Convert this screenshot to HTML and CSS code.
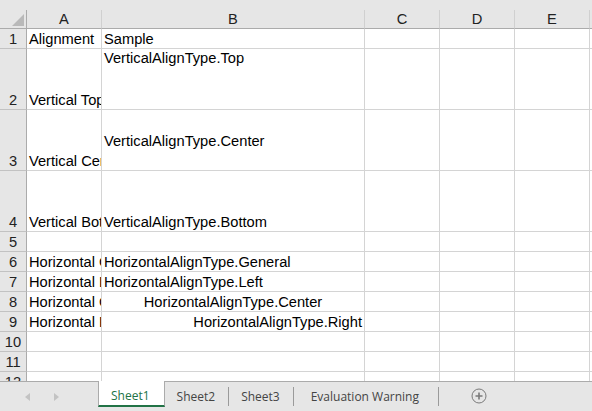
FILE: index.html
```html
<!DOCTYPE html>
<html lang="en">
<head>
    <meta charset="UTF-8">
    <title>Alignment - Sheet1</title>
    <link rel="stylesheet" href="styles.css">
</head>
<body>

<div class="sheet">
    <div class="strip"></div>

    <!-- Column headers -->
    <div class="corner"><span class="tri"></span></div>
    <div class="col-head">A</div>
    <div class="col-head">B</div>
    <div class="col-head">C</div>
    <div class="col-head">D</div>
    <div class="col-head">E</div>
    <div class="col-head"></div>

    <!-- Row 1 -->
    <div class="row-head">1</div>
    <div class="cell">Alignment</div>
    <div class="cell">Sample</div>
    <div class="cell"></div><div class="cell"></div><div class="cell"></div><div class="cell"></div>

    <!-- Row 2 -->
    <div class="row-head">2</div>
    <div class="cell">Vertical Top</div>
    <div class="cell top">VerticalAlignType.Top</div>
    <div class="cell"></div><div class="cell"></div><div class="cell"></div><div class="cell"></div>

    <!-- Row 3 -->
    <div class="row-head">3</div>
    <div class="cell">Vertical Center</div>
    <div class="cell middle">VerticalAlignType.Center</div>
    <div class="cell"></div><div class="cell"></div><div class="cell"></div><div class="cell"></div>

    <!-- Row 4 -->
    <div class="row-head">4</div>
    <div class="cell">Vertical Bottom</div>
    <div class="cell">VerticalAlignType.Bottom</div>
    <div class="cell"></div><div class="cell"></div><div class="cell"></div><div class="cell"></div>

    <!-- Row 5 -->
    <div class="row-head">5</div>
    <div class="cell"></div><div class="cell"></div>
    <div class="cell"></div><div class="cell"></div><div class="cell"></div><div class="cell"></div>

    <!-- Row 6 -->
    <div class="row-head">6</div>
    <div class="cell">Horizontal General</div>
    <div class="cell">HorizontalAlignType.General</div>
    <div class="cell"></div><div class="cell"></div><div class="cell"></div><div class="cell"></div>

    <!-- Row 7 -->
    <div class="row-head">7</div>
    <div class="cell">Horizontal Left</div>
    <div class="cell">HorizontalAlignType.Left</div>
    <div class="cell"></div><div class="cell"></div><div class="cell"></div><div class="cell"></div>

    <!-- Row 8 -->
    <div class="row-head">8</div>
    <div class="cell">Horizontal Center</div>
    <div class="cell center">HorizontalAlignType.Center</div>
    <div class="cell"></div><div class="cell"></div><div class="cell"></div><div class="cell"></div>

    <!-- Row 9 -->
    <div class="row-head">9</div>
    <div class="cell">Horizontal Right</div>
    <div class="cell right">HorizontalAlignType.Right</div>
    <div class="cell"></div><div class="cell"></div><div class="cell"></div><div class="cell"></div>

    <!-- Rows 10 - 12 -->
    <div class="row-head">10</div>
    <div class="cell"></div><div class="cell"></div>
    <div class="cell"></div><div class="cell"></div><div class="cell"></div><div class="cell"></div>

    <div class="row-head">11</div>
    <div class="cell"></div><div class="cell"></div>
    <div class="cell"></div><div class="cell"></div><div class="cell"></div><div class="cell"></div>

    <div class="row-head">12</div>
    <div class="cell"></div><div class="cell"></div>
    <div class="cell"></div><div class="cell"></div><div class="cell"></div><div class="cell"></div>
</div>

<!-- Sheet tabs -->
<div class="tabbar">
    <div class="nav">
        <svg width="5" height="8" viewBox="0 0 5 8"><path d="M5 0 L0 4 L5 8 Z" fill="#c3c3c3"/></svg>
        <svg width="5" height="8" viewBox="0 0 5 8"><path d="M0 0 L5 4 L0 8 Z" fill="#c3c3c3"/></svg>
    </div>
    <div class="tab active">Sheet1</div>
    <div class="tab">Sheet2</div>
    <div class="tab">Sheet3</div>
    <div class="tab">Evaluation Warning</div>
    <div class="add">
        <svg width="16" height="16" viewBox="0 0 16 16">
            <circle cx="8" cy="8" r="7" fill="none" stroke="#7a7a7a" stroke-width="1"/>
            <path d="M4.5 8 H11.5 M8 4.5 V11.5" stroke="#7a7a7a" stroke-width="1.6"/>
        </svg>
    </div>
</div>

</body>
</html>
```

FILE: styles.css
```css
body {
    margin: 0;
    width: 592px;
    height: 411px;
    overflow: hidden;
    background: #ffffff;
    font-family: "Liberation Sans", Arial, sans-serif;
    font-size: 14.67px;
    color: #000000;
}

/* Grid of cells */
.sheet {
    display: grid;
    grid-template-columns: 27px 75px 263px 75px 75px 75px 1fr;
    grid-template-rows: 10px 19px 20px 61px 61px 61px repeat(8, 20px);
    height: 381px;
    overflow: hidden;
}
.strip {
    grid-column: 1 / -1;
    background: #e6e6e6;
}
.corner {
    position: relative;
    background: #e6e6e6;
    border-right: 1px solid #ababab;
    border-bottom: 1px solid #ababab;
}
.tri {
    position: absolute;
    right: 2px;
    bottom: 2px;
    width: 0;
    height: 0;
    border-left: 12px solid transparent;
    border-bottom: 12px solid #b9b9b9;
}
.col-head {
    background: #e6e6e6;
    border-right: 1px solid #d0d0d0;
    border-bottom: 1px solid #ababab;
    color: #222222;
    text-align: center;
    line-height: 19px;
}
.row-head {
    background: #e6e6e6;
    border-right: 1px solid #ababab;
    border-bottom: 1px solid #c2c2c2;
    color: #222222;
    display: flex;
    align-items: flex-end;
    justify-content: center;
    line-height: 17px;
}
.cell {
    border-right: 1px solid #d4d4d4;
    border-bottom: 1px solid #d4d4d4;
    display: flex;
    align-items: flex-end;
    padding: 0 2px;
    line-height: 17px;
    white-space: nowrap;
    overflow: hidden;
}
.cell.top { align-items: flex-start; padding-top: 1px; }
.cell.middle { align-items: center; padding-top: 3px; }
.cell.center { justify-content: center; }
.cell.right { justify-content: flex-end; }

/* Tab bar at the bottom */
.tabbar {
    display: flex;
    height: 29px;
    border-top: 1px solid #ababab;
    background: #e6e6e6;
    font-family: "Open Sans", "Noto Sans", sans-serif;
    font-size: 12px;
    color: #444444;
}
.nav {
    width: 98px;
    display: flex;
    align-items: center;
    gap: 24px;
    padding-left: 25px;
    box-sizing: border-box;
    padding-top: 1px;
}
.tab {
    position: relative;
    height: 25px;
    padding: 3px 14px 0 12px;
    box-sizing: border-box;
    display: flex;
    align-items: center;
}
.tab::after {
    content: "";
    position: absolute;
    right: 0;
    top: 5px;
    height: 19px;
    border-right: 1px solid #9a9a9a;
}
.tab.active {
    margin-top: -1px;
    height: 26px;
    background: #ffffff;
    border-left: 1px solid #ababab;
    border-right: 1px solid #ababab;
    border-bottom: 2px solid #217346;
    padding-top: 4px;
    color: #217346;
}
.tab.active::after {
    display: none;
}
.tab:nth-child(5) {
    padding-left: 17px;
    padding-right: 20px;
}
.add {
    margin-left: 32px;
    display: flex;
    align-items: center;
    padding-top: 1px;
    height: 25px;
}
```
